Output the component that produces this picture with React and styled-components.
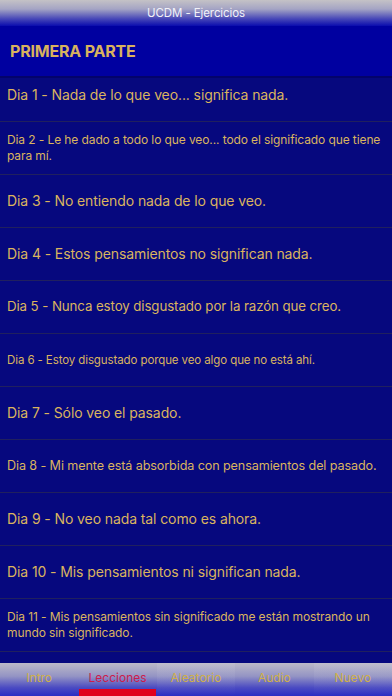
import React from "react";
import styled, { createGlobalStyle, css } from "styled-components";

const GlobalStyle = createGlobalStyle`
  html, body {
    margin: 0;
    padding: 0;
    background: #06087e;
  }
  body {
    font-family: Inter, "Liberation Sans", Arial, sans-serif;
  }
`;

const Screen = styled.div`
  width: 392px;
  height: 696px;
  display: flex;
  flex-direction: column;
  overflow: hidden;
  background: #06087e;
`;

const TopBar = styled.div`
  height: 26px;
  flex-shrink: 0;
  display: flex;
  align-items: center;
  justify-content: center;
  background: linear-gradient(
    180deg,
    #c4c2c6 0%,
    #a4a4c4 35%,
    #4848b8 72%,
    #0a0cae 100%
  );
  color: #f2f2f8;
  font-size: 11.5px;
  letter-spacing: -0.1px;
`;

const SectionHeader = styled.div`
  height: 50px;
  flex-shrink: 0;
  display: flex;
  align-items: center;
  padding-left: 10px;
  background: #0000a0;
  border-bottom: 2px solid #03036a;
  color: #d8b25e;
  font-size: 16px;
  font-weight: 700;
  letter-spacing: -0.2px;
`;

const List = styled.div`
  flex: 1;
  overflow: hidden;
  background: #06087e;
`;

const Row = styled.div`
  height: 53px;
  box-sizing: border-box;
  display: flex;
  align-items: center;
  padding: 0 8px 0 7px;
  border-bottom: 1px solid #20205e;
  color: #dab45f;
  line-height: 1.3;
  font-size: ${(p) => p.$fs}px;
  letter-spacing: -0.1px;
  ${(p) =>
    p.$clipped &&
    css`
      height: 44px;
      padding-bottom: 8px;
    `}
`;

const TabBar = styled.div`
  height: 33px;
  flex-shrink: 0;
  display: grid;
  grid-template-columns: repeat(5, 1fr);
  background: linear-gradient(
    180deg,
    #bcbac8 0%,
    #9494c4 40%,
    #4a4ac2 75%,
    #2a2cc4 100%
  );
`;

const Tab = styled.div`
  position: relative;
  display: flex;
  align-items: center;
  justify-content: center;
  padding-bottom: 4px;
  font-size: 12px;
  color: ${(p) => (p.$active ? "#cc1c4c" : "#cfb04a")};
  ${(p) =>
    p.$light &&
    css`
      background: linear-gradient(
        180deg,
        rgba(255, 255, 255, 0.08) 0%,
        rgba(255, 255, 255, 0.04) 60%,
        rgba(255, 255, 255, 0) 100%
      );
    `}
`;

const Underline = styled.div`
  position: absolute;
  left: 1px;
  right: 1px;
  bottom: 0;
  height: 7px;
  background: #e0001c;
`;

const lessons = [
  { text: "Dia 1 - Nada de lo que veo... significa nada.", fs: 14, clipped: true },
  { text: "Dia 2 - Le he dado a todo lo que veo... todo el significado que tiene para mí.", fs: 12 },
  { text: "Dia 3 - No entiendo nada de lo que veo.", fs: 14 },
  { text: "Dia 4 - Estos pensamientos no significan nada.", fs: 14 },
  { text: "Dia 5 - Nunca estoy disgustado por la razón que creo.", fs: 13.3 },
  { text: "Dia 6 - Estoy disgustado porque veo algo que no está ahí.", fs: 11.5 },
  { text: "Dia 7 - Sólo veo el pasado.", fs: 14 },
  { text: "Dia 8 - Mi mente está absorbida con pensamientos del pasado.", fs: 12.6 },
  { text: "Dia 9 - No veo nada tal como es ahora.", fs: 14 },
  { text: "Dia 10 - Mis pensamientos ni significan nada.", fs: 14 },
  { text: "Dia 11 - Mis pensamientos sin significado me están mostrando un mundo sin significado.", fs: 12 },
];

const tabs = ["Intro", "Lecciones", "Aleatorio", "Audio", "Nuevo"];

export default function App() {
  return (
    <Screen>
      <GlobalStyle />
      <TopBar>UCDM - Ejercicios</TopBar>
      <SectionHeader>PRIMERA PARTE</SectionHeader>
      <List>
        {lessons.map((l) => (
          <Row key={l.text} $fs={l.fs} $clipped={l.clipped}>
            {l.text}
          </Row>
        ))}
      </List>
      <TabBar>
        {tabs.map((t, i) => (
          <Tab key={t} $active={i === 1} $light={i === 4 || i === 2}>
            {t}
            {i === 1 && <Underline />}
          </Tab>
        ))}
      </TabBar>
    </Screen>
  );
}
